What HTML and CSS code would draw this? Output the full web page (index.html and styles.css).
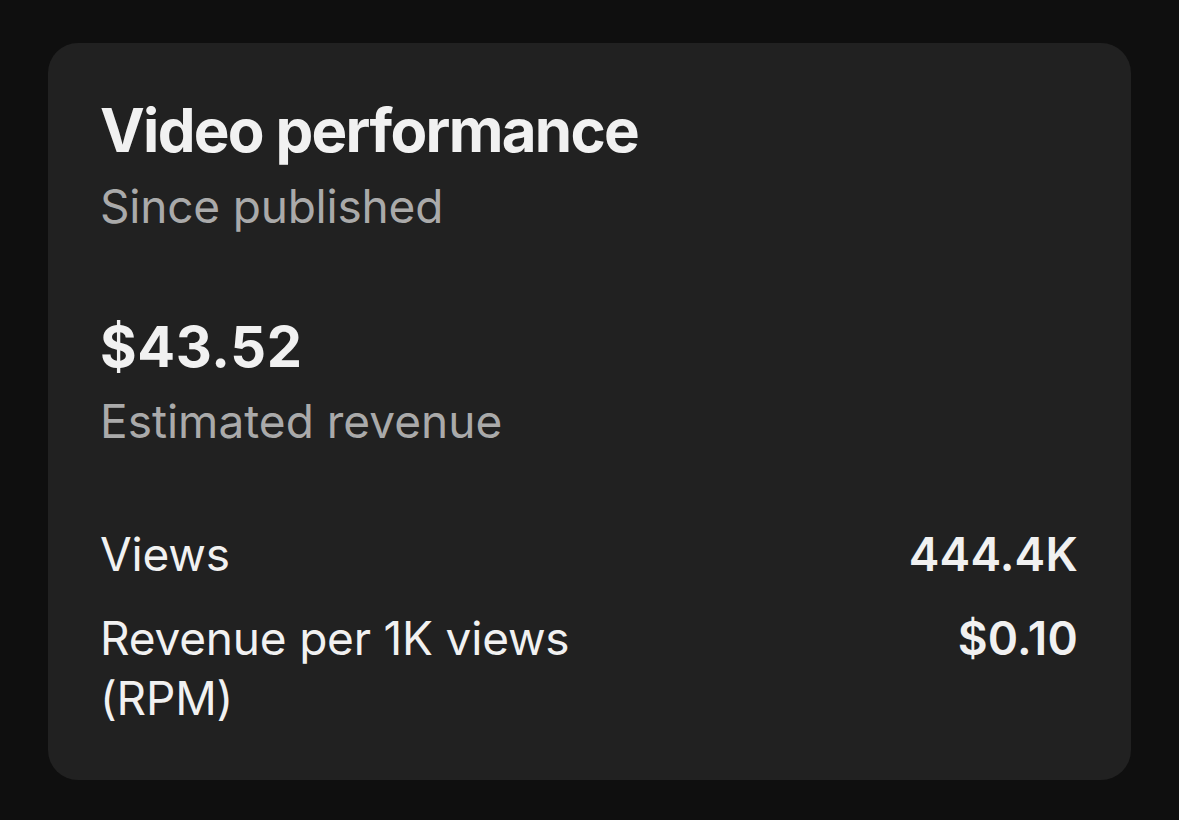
FILE: index.html
```html
<!DOCTYPE html>
<html lang="en">
<head>
<meta charset="utf-8">
<title>Video performance</title>
<link rel="stylesheet" href="styles.css">
</head>
<body>
<section class="card">
  <h1 class="title">Video performance</h1>
  <p class="subtitle">Since published</p>
  <div class="amount">$43.52</div>
  <p class="amount-label">Estimated revenue</p>
  <div class="stats">
    <div class="row">
      <span class="label">Views</span>
      <span class="value">444.4K</span>
    </div>
    <div class="row">
      <span class="label">Revenue per 1K views<br>(RPM)</span>
      <span class="value">$0.10</span>
    </div>
  </div>
</section>
</body>
</html>
```

FILE: styles.css
```css
html, body {
  margin: 0;
  padding: 0;
  background: #0f0f0f;
  height: 100%;
}
body {
  padding: 43px 48px 0 48px;
  box-sizing: border-box;
  font-family: Inter, "Noto Sans", "Liberation Sans", sans-serif;
  color: #f1f1f1;
}
.card {
  width: 1083px;
  box-sizing: border-box;
  background: #212121;
  border-radius: 30px;
  padding: 51px 53px 52px 52px;
}
.title {
  margin: 0;
  font-size: 60px;
  line-height: 72px;
  font-weight: 700;
  letter-spacing: -1.7px;
}
.subtitle {
  margin: 12px 0 0 0;
  font-size: 46px;
  line-height: 56px;
  color: #aaaaaa;
  font-weight: 400;
  letter-spacing: -0.2px;
}
.amount {
  margin-top: 79px;
  font-size: 56px;
  line-height: 68px;
  font-weight: 700;
  letter-spacing: 0.6px;
}
.amount-label {
  margin: 12px 0 0 0;
  font-size: 46px;
  line-height: 56px;
  color: #aaaaaa;
}
.stats {
  margin-top: 75px;
  display: flex;
  flex-direction: column;
  gap: 24px;
}
.row {
  display: flex;
  justify-content: space-between;
  align-items: flex-start;
  font-size: 46px;
  line-height: 60px;
  letter-spacing: -0.2px;
}
.value {
  font-weight: 600;
  letter-spacing: 0.2px;
}
```
